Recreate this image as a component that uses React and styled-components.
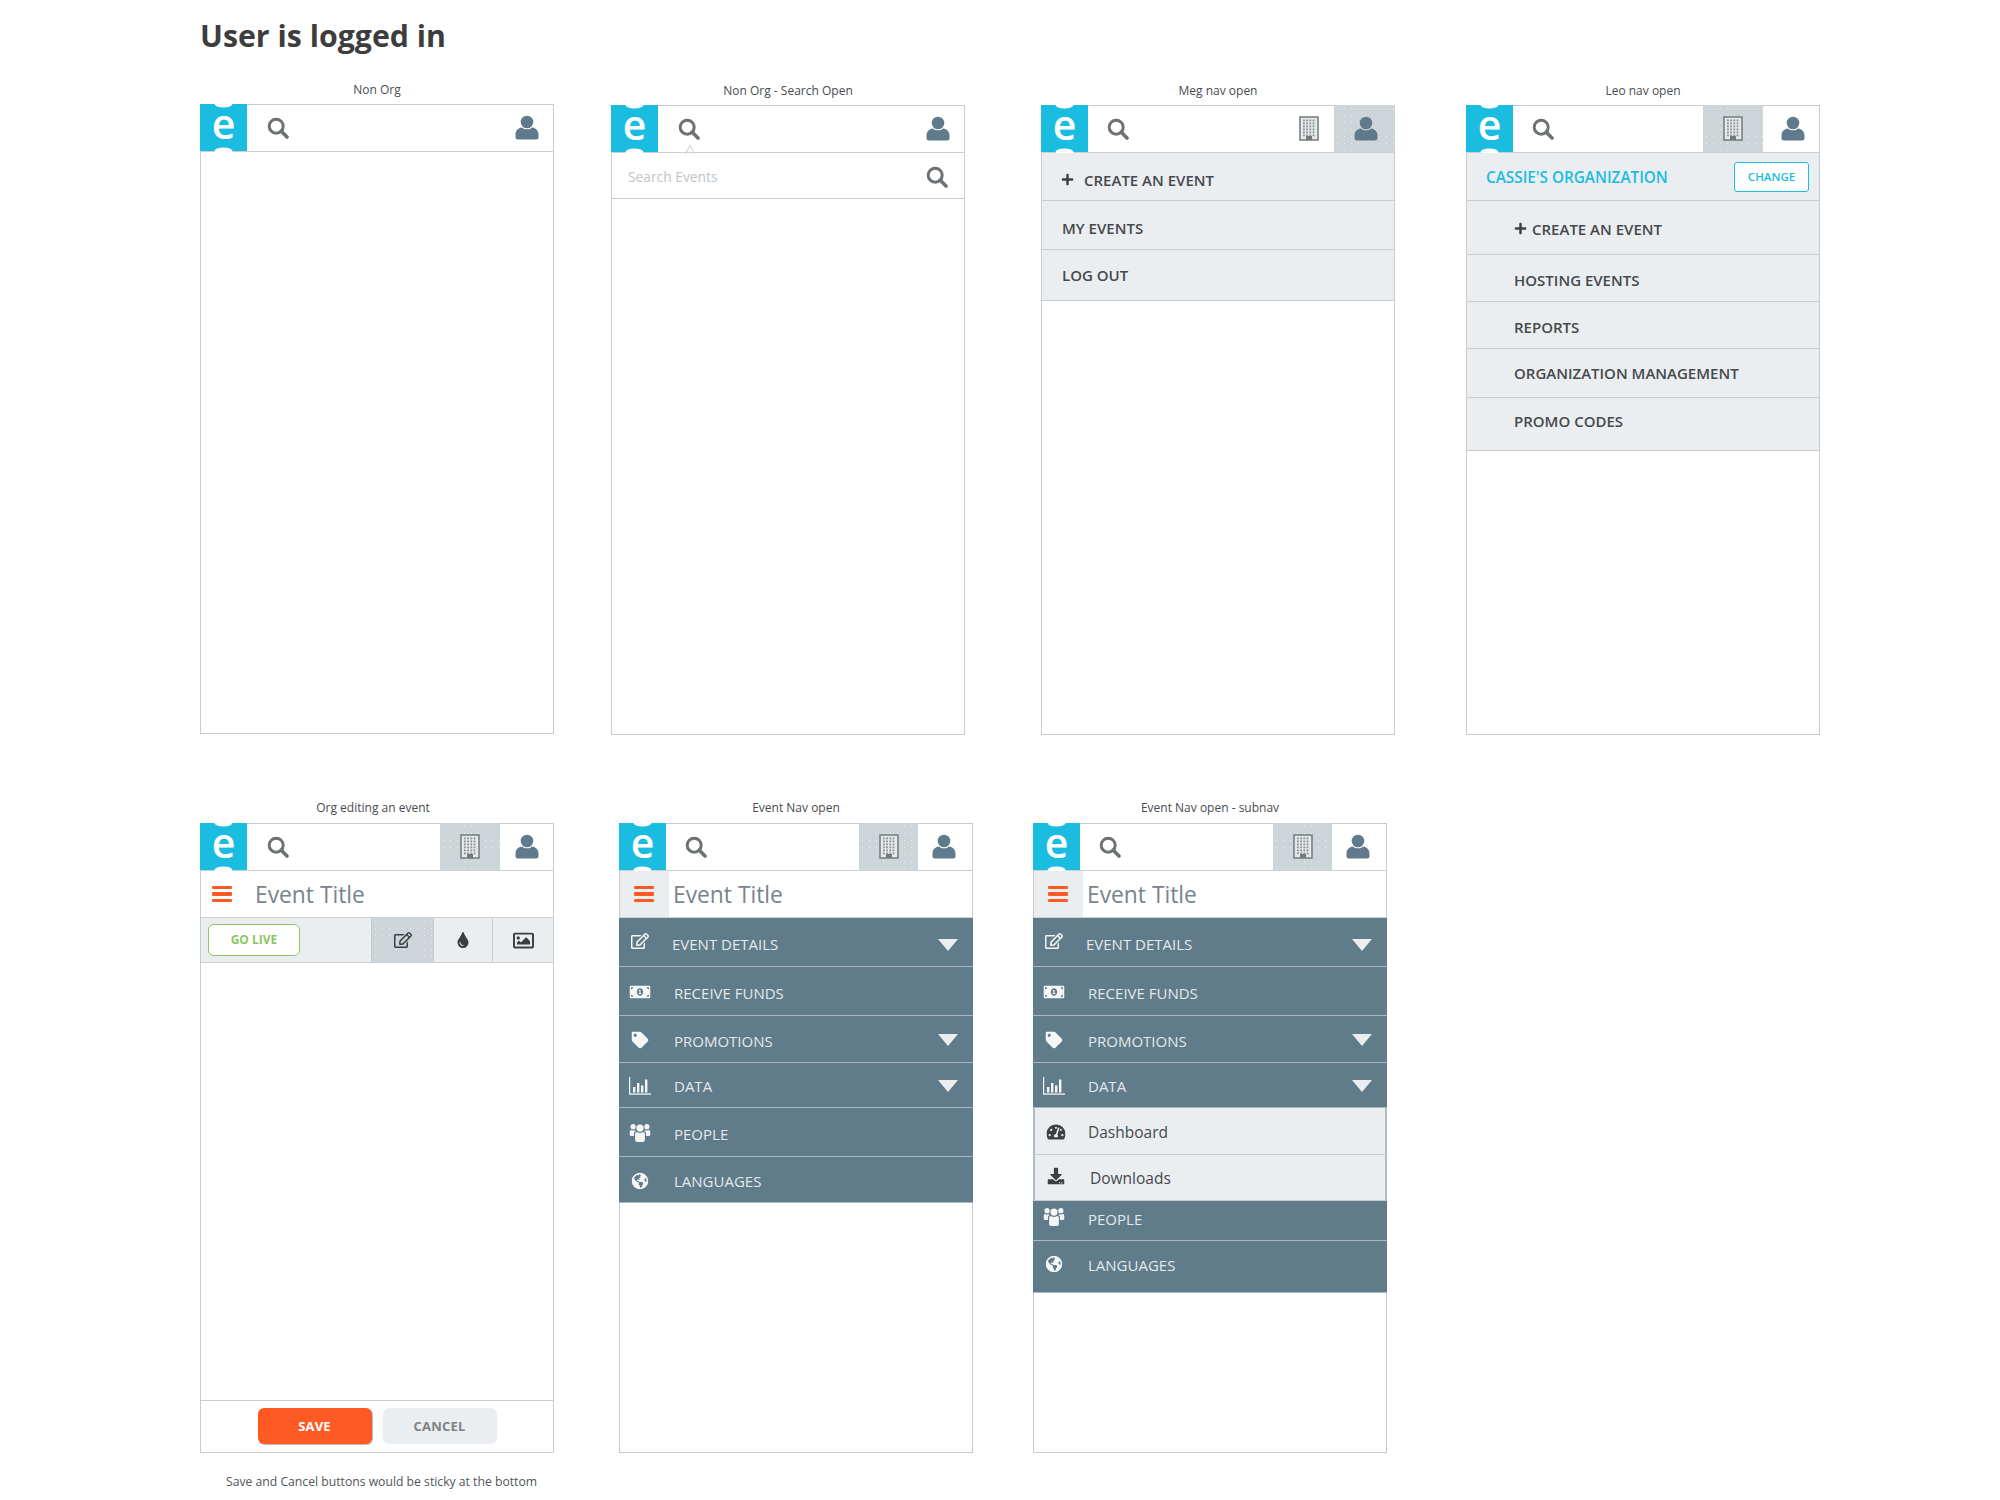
import React from "react";
import styled, { createGlobalStyle } from "styled-components";
import {
  FaPlus,
  FaRegEdit,
  FaTint,
  FaRegImage,
  FaMoneyBillAlt,
  FaTag,
  FaGlobeAmericas,
  FaTachometerAlt,
  FaDownload,
} from "react-icons/fa";

const GlobalStyle = createGlobalStyle`
  html, body {
    margin: 0;
    background: #ffffff;
    font-family: "Open Sans", "Liberation Sans", sans-serif;
  }
  * { box-sizing: border-box; }
`;

const Page = styled.div`
  width: 2000px;
  height: 1500px;
  padding: 13px 0 0 200px;
  overflow: hidden;
`;

const Title = styled.h1`
  margin: 0 0 23px;
  height: 45px;
  line-height: 45px;
  font-size: 30.3px;
  font-weight: 700;
  color: #3d3d3d;
`;

const Row = styled.div`
  display: flex;
  align-items: flex-start;
  margin-bottom: ${(p) => p.$mb || 0}px;
`;

const Column = styled.div`
  width: 354px;
  margin-left: ${(p) => p.$ml || 0}px;
  margin-top: ${(p) => p.$mt || 0}px;
`;

const Label = styled.div`
  height: 18px;
  line-height: 18px;
  margin-bottom: ${(p) => p.$mb ?? 5}px;
  padding-right: ${(p) => p.$pr || 0}px;
  font-size: 12px;
  color: #474c50;
  text-align: center;
  white-space: nowrap;
`;

const Phone = styled.div`
  position: relative;
  display: flex;
  flex-direction: column;
  width: 354px;
  height: 630px;
  border: 1px solid #c8cccf;
  background: #ffffff;
`;

const Header = styled.div`
  display: flex;
  align-items: stretch;
  flex: none;
  height: 48px;
  margin: -1px -1px 0;
  border-bottom: 1px solid #cdd1d3;
`;

const SearchCell = styled.div`
  flex: 1;
  display: flex;
  align-items: center;
  padding-left: ${(p) => p.$pl || 20}px;
`;

const HeaderCell = styled.div`
  display: flex;
  align-items: center;
  justify-content: center;
  width: ${(p) => p.$w || 60}px;
  padding-left: ${(p) => Math.max(p.$shift || 0, 0)}px;
  padding-right: ${(p) => Math.max(-(p.$shift || 0), 0)}px;
  background-color: ${(p) => (p.$active ? "#ced5d8" : "transparent")};
  background-image: ${(p) =>
    p.$active ? "radial-gradient(#e2f2f2 0.6px, transparent 0.9px)" : "none"};
  background-size: 7px 7px;
`;

const TitleBar = styled.div`
  display: flex;
  align-items: center;
  flex: none;
  height: 47px;
  border-bottom: 1px solid #cdd1d3;
`;

const MenuCell = styled.div`
  display: flex;
  align-items: center;
  justify-content: center;
  flex: none;
  align-self: stretch;
  width: ${(p) => (p.$open ? 49 : 42)}px;
  padding-right: ${(p) => (p.$open ? 2 : 0)}px;
  background: ${(p) => (p.$open ? "#ebeef1" : "transparent")};
`;

const Burger = styled.div`
  display: flex;
  flex-direction: column;
  gap: 3px;
  width: 20px;

  span {
    height: 3.5px;
    border-radius: 1px;
    background: #ff5a24;
  }
`;

const EventTitle = styled.div`
  margin-left: ${(p) => p.$ml || 0}px;
  font-size: 22.8px;
  color: #78848b;
`;

const Toolbar = styled.div`
  display: flex;
  align-items: stretch;
  flex: none;
  height: 45px;
  background: #ebeef1;
  border-bottom: 1px solid #cdd1d3;
`;

const GoLive = styled.div`
  align-self: center;
  width: 92px;
  height: 32px;
  margin: 0 auto 0 7px;
  border: 1.5px solid #8cc665;
  border-radius: 6px;
  background: #ffffff;
  font-size: 12px;
  font-weight: 700;
  line-height: 29px;
  text-align: center;
  color: #8cc665;
`;

const ToolCell = styled.div`
  display: flex;
  align-items: center;
  justify-content: center;
  width: ${(p) => p.$w}px;
  border-left: 1px solid #c6cbce;
  color: #3c3f42;
  font-size: ${(p) => p.$size || 18}px;
  background-color: ${(p) => (p.$active ? "#ced5d8" : "transparent")};
  background-image: ${(p) =>
    p.$active ? "radial-gradient(#e2f2f2 0.6px, transparent 0.9px)" : "none"};
  background-size: 7px 7px;
`;

const Footer = styled.div`
  display: flex;
  justify-content: center;
  gap: 11px;
  margin-top: auto;
  padding-top: 7px;
  flex: none;
  height: 52px;
  border-top: 1px solid #c8cccf;
`;

const FooterButton = styled.div`
  width: 114px;
  height: 36px;
  border-radius: 6px;
  background: ${(p) => (p.$primary ? "#ff5a24" : "#ebeef1")};
  box-shadow: ${(p) => (p.$primary ? "1px 1px 1px #b9bcbc" : "none")};
  color: ${(p) => (p.$primary ? "#ffffff" : "#7c8388")};
  font-size: 13px;
  font-weight: 700;
  line-height: 36px;
  text-align: center;
  letter-spacing: 0.2px;
`;

const Note = styled.div`
  margin: 20px 0 0 26px;
  font-size: 12.2px;
  line-height: 18px;
  color: #50565b;
  white-space: nowrap;
`;

const SearchBar = styled.div`
  display: flex;
  align-items: center;
  justify-content: space-between;
  flex: none;
  height: 46px;
  padding: 2px 16px 0 16px;
  border-bottom: 1px solid #cdd1d3;
  font-size: 13.8px;
  color: #c0c5c9;
`;

const Caret = styled.svg`
  position: absolute;
  top: 38px;
  left: 73px;
`;

const MenuList = styled.div`
  display: flex;
  flex-direction: column;
  flex: none;
`;

const MenuRow = styled.div`
  display: flex;
  align-items: center;
  height: ${(p) => p.$h}px;
  padding-left: ${(p) => p.$pl || 20}px;
  padding-top: ${(p) => p.$pt || 0}px;
  padding-bottom: ${(p) => p.$pb || 0}px;
  gap: ${(p) => p.$gap || 0}px;
  background: #ebeef1;
  border-bottom: 1px solid #c8cdd0;
  font-size: 15px;
  font-weight: 600;
  color: #45494c;
  white-space: nowrap;
`;

const OrgRow = styled(MenuRow)`
  justify-content: space-between;
  padding-right: 10px;
  color: #1abde0;
  font-size: 15.3px;
`;

const ChangeButton = styled.div`
  width: 75px;
  height: 30px;
  border: 1.5px solid #1abde0;
  border-radius: 3px;
  background: #ffffff;
  font-size: 11.5px;
  font-weight: 600;
  line-height: 27px;
  text-align: center;
  color: #1abde0;
`;

const PlusIcon = styled(FaPlus)`
  font-size: ${(p) => p.$size || 11}px;
  color: #3d4043;
`;

const NavList = styled.div`
  display: flex;
  flex-direction: column;
  flex: none;
  margin: 0 -1px;
`;

const NavRow = styled.div`
  position: relative;
  display: flex;
  align-items: center;
  height: ${(p) => p.$h}px;
  padding-top: ${(p) => p.$pt ?? 3}px;
  padding-bottom: ${(p) => p.$pb || 0}px;
  padding-left: ${(p) => p.$pl ?? 55}px;
  background: #607b89;
  border-bottom: 1px solid #a9b8c0;
  font-size: 15px;
  color: #e4e9ed;
  white-space: nowrap;
`;

const SubRow = styled.div`
  position: relative;
  display: flex;
  align-items: center;
  height: ${(p) => p.$h}px;
  padding-top: 1px;
  padding-left: ${(p) => p.$pl ?? 55}px;
  background: #ebeef1;
  border: 1px solid #b5bbbf;
  border-width: 0 2px 1px;
  border-bottom-color: #c6cbce;
  font-size: 15.5px;
  color: #45494c;
`;

const NavIcon = styled.span`
  position: absolute;
  left: 21px;
  top: 50%;
  display: flex;
  transform: translate(-50%, -50%);
  margin-top: ${(p) => p.$dy || 0}px;
  font-size: ${(p) => p.$size || 18}px;
  color: ${(p) => p.$color || "#f4f6f8"};
`;

const Chevron = styled.span`
  position: absolute;
  right: 15px;
  top: 50%;
  margin-top: ${(p) => p.$dy || 0}px;
  width: 0;
  height: 0;
  border-left: 10px solid transparent;
  border-right: 10px solid transparent;
  border-top: 12px solid #ebeef1;
`;

function Logo() {
  return (
    <svg width="47" height="47" viewBox="0 0 47 47" style={{ flex: "none", overflow: "visible" }}>
      <rect width="47" height="47" fill="#1abde0" />
      <ellipse cx="23.5" cy="0" rx="9" ry="3.5" fill="#fff" />
      <ellipse cx="23.5" cy="47" rx="9" ry="3.5" fill="#fff" />
      <text
        x="23.5"
        y="35"
        textAnchor="middle"
        fontSize="41"
        fontWeight="600"
        fontFamily="Open Sans, sans-serif"
        fill="#fff"
      >
        e
      </text>
    </svg>
  );
}

function SearchIcon({ size = 22 }) {
  return (
    <svg width={size} height={size} viewBox="0 0 22 22" fill="none" stroke="#6f7274">
      <circle cx="9.2" cy="9.2" r="7" strokeWidth="3" />
      <path d="M14.3 14.3 L20 20" strokeWidth="3.6" strokeLinecap="round" />
    </svg>
  );
}

function UserIcon() {
  return (
    <svg width="24" height="25" viewBox="0 0 24 25" fill="#5f7b8b">
      <circle cx="12" cy="7" r="6.3" />
      <path d="M7 12.4 C9 15 15 15 17 12.4 C21 13 23.5 15.5 23.5 19.5 L23.5 22 Q23.5 24.5 21 24.5 L3 24.5 Q0.5 24.5 0.5 22 L0.5 19.5 C0.5 15.5 3 13 7 12.4 Z" />
    </svg>
  );
}

function BuildingIcon() {
  const dots = [];
  for (let r = 0; r < 6; r++) {
    for (let c = 0; c < 4; c++) {
      dots.push(<rect key={`${r}-${c}`} x={4 + c * 3.2} y={3.5 + r * 3} width="1.8" height="1.8" />);
    }
  }
  return (
    <svg width="20" height="25" viewBox="0 0 20 25">
      <rect x="1" y="1" width="18" height="23" fill="#e6e9ea" stroke="#7b8184" strokeWidth="1.6" />
      <g fill="#8b9093">{dots}</g>
      <rect x="7" y="20" width="6" height="4" fill="#74797c" />
    </svg>
  );
}

function BarsIcon() {
  return (
    <svg width="22" height="18" viewBox="0 0 22 18" fill="#f4f6f8">
      <rect x="0" y="0" width="1.2" height="17" />
      <rect x="0" y="16.4" width="22" height="1.3" />
      <rect x="4" y="10" width="2.4" height="5.5" />
      <rect x="8" y="6" width="2.4" height="9.5" />
      <rect x="12" y="8.5" width="2.4" height="7" />
      <rect x="16" y="2.5" width="2.4" height="13" />
    </svg>
  );
}

function PeopleIcon() {
  return (
    <svg width="21" height="19" viewBox="0 0 21 19" fill="#f4f6f8">
      <circle cx="10.5" cy="4.6" r="3.6" />
      <circle cx="3.6" cy="3.2" r="2.6" />
      <circle cx="17.4" cy="3.2" r="2.6" />
      <path d="M5.6 10.4 Q5.6 8.6 7.4 8.6 Q10.5 10.4 13.6 8.6 Q15.4 8.6 15.4 10.4 L15.4 16.6 Q15.4 18.6 13.4 18.6 L7.6 18.6 Q5.6 18.6 5.6 16.6 Z" />
      <path d="M0 8.6 Q0 6.4 1.8 6.4 Q3.6 7.6 5.6 6.4 Q5.9 7 5.7 7.8 Q4.4 8.4 4.4 10.4 L4.4 12.4 L1.6 12.4 Q0 12.4 0 10.8 Z" />
      <path d="M21 8.6 Q21 6.4 19.2 6.4 Q17.4 7.6 15.4 6.4 Q15.1 7 15.3 7.8 Q16.6 8.4 16.6 10.4 L16.6 12.4 L19.4 12.4 Q21 12.4 21 10.8 Z" />
    </svg>
  );
}

function TopBar({ building, active, searchPl, userW, userShift, buildingW }) {
  return (
    <Header>
      <Logo />
      <SearchCell $pl={searchPl}>
        <SearchIcon />
      </SearchCell>
      {building && (
        <HeaderCell $active={active === "building"} $w={buildingW || 60}>
          <BuildingIcon />
        </HeaderCell>
      )}
      <HeaderCell $active={active === "user"} $w={userW || 54} $shift={userShift}>
        <UserIcon />
      </HeaderCell>
    </Header>
  );
}

function EventBar({ open }) {
  return (
    <TitleBar>
      <MenuCell $open={open}>
        <Burger>
          <span />
          <span />
          <span />
        </Burger>
      </MenuCell>
      <EventTitle $ml={open ? 4 : 12}>Event Title</EventTitle>
    </TitleBar>
  );
}

function EventNavTop() {
  return (
    <>
      <NavRow $h={49} $pl={53}>
        <NavIcon $dy={-1}><FaRegEdit /></NavIcon>
        EVENT DETAILS
        <Chevron $dy={-3} />
      </NavRow>
      <NavRow $h={49}>
        <NavIcon $dy={1}><FaMoneyBillAlt size={21} /></NavIcon>
        RECEIVE FUNDS
      </NavRow>
      <NavRow $h={47}>
        <NavIcon $dy={1}><FaTag size={17} /></NavIcon>
        PROMOTIONS
        <Chevron $dy={-5} />
      </NavRow>
      <NavRow $h={45} $pt={2}>
        <NavIcon $dy={1}><BarsIcon /></NavIcon>
        DATA
        <Chevron $dy={-5} />
      </NavRow>
    </>
  );
}

export default function App() {
  return (
    <Page>
      <GlobalStyle />
      <Title>User is logged in</Title>

      <Row $mb={64}>
        <Column>
          <Label>Non Org</Label>
          <Phone>
            <TopBar />
          </Phone>
        </Column>

        <Column $ml={57} $mt={1}>
          <Label>Non Org - Search Open</Label>
          <Phone>
            <TopBar />
            <SearchBar>
              Search Events
              <SearchIcon />
            </SearchBar>
            <Caret width="10" height="10" viewBox="0 0 10 10" fill="none" stroke="#c9cdd0">
              <path d="M0.5 10 L5 1 L9.5 10" />
            </Caret>
          </Phone>
        </Column>

        <Column $ml={76} $mt={1}>
          <Label>Meg nav open</Label>
          <Phone>
            <TopBar building active="user" userW={61} userShift={2} buildingW={50} searchPl={19} />
            <MenuList>
              <MenuRow $h={48} $gap={10} $pl={19} $pt={6}>
                <PlusIcon $size={13} />
                CREATE AN EVENT
              </MenuRow>
              <MenuRow $h={49} $pt={6}>MY EVENTS</MenuRow>
              <MenuRow $h={51}>LOG OUT</MenuRow>
            </MenuList>
          </Phone>
        </Column>

        <Column $ml={71} $mt={1}>
          <Label>Leo nav open</Label>
          <Phone>
            <TopBar building active="building" userW={57} userShift={2} searchPl={19} />
            <MenuList>
              <OrgRow $h={48} $pl={19}>
                CASSIE'S ORGANIZATION
                <ChangeButton>CHANGE</ChangeButton>
              </OrgRow>
              <MenuRow $h={54} $pl={47} $gap={5} $pt={2}>
                <PlusIcon $size={13} />
                CREATE AN EVENT
              </MenuRow>
              <MenuRow $h={47} $pl={47} $pt={4}>HOSTING EVENTS</MenuRow>
              <MenuRow $h={47} $pl={47} $pt={4}>REPORTS</MenuRow>
              <MenuRow $h={49} $pl={47}>ORGANIZATION MANAGEMENT</MenuRow>
              <MenuRow $h={53} $pl={47} $pb={6}>PROMO CODES</MenuRow>
            </MenuList>
          </Phone>
        </Column>
      </Row>

      <Row>
        <Column>
          <Label $pr={8} $mb={6}>Org editing an event</Label>
          <Phone>
            <TopBar building active="building" />
            <EventBar />
            <Toolbar>
              <GoLive>GO LIVE</GoLive>
              <ToolCell $w={62} $active><FaRegEdit /></ToolCell>
              <ToolCell $w={59} $size={16}><FaTint /></ToolCell>
              <ToolCell $w={61} $size={21}><FaRegImage /></ToolCell>
            </Toolbar>
            <Footer>
              <FooterButton $primary>SAVE</FooterButton>
              <FooterButton>CANCEL</FooterButton>
            </Footer>
          </Phone>
          <Note>Save and Cancel buttons would be sticky at the bottom</Note>
        </Column>

        <Column $ml={65}>
          <Label $mb={6}>Event Nav open</Label>
          <Phone>
            <TopBar building active="building" userW={55} userShift={-4} buildingW={59} searchPl={19} />
            <EventBar open />
            <NavList>
              <EventNavTop />
              <NavRow $h={49}>
                <NavIcon $dy={1}><PeopleIcon /></NavIcon>
                PEOPLE
              </NavRow>
              <NavRow $h={46}>
                <NavIcon $dy={1}><FaGlobeAmericas size={17} /></NavIcon>
                LANGUAGES
              </NavRow>
            </NavList>
          </Phone>
        </Column>

        <Column $ml={60}>
          <Label $mb={6}>Event Nav open - subnav</Label>
          <Phone>
            <TopBar building active="building" userW={55} userShift={-4} buildingW={59} searchPl={19} />
            <EventBar open />
            <NavList>
              <EventNavTop />
              <SubRow $h={47} $pl={53}>
                <NavIcon $color="#3d4043" $dy={1}><FaTachometerAlt size={19} /></NavIcon>
                Dashboard
              </SubRow>
              <SubRow $h={46}>
                <NavIcon $color="#3d4043" $dy={-2}><FaDownload size={17} /></NavIcon>
                Downloads
              </SubRow>
              <NavRow $h={40} $pt={0} $pb={4}>
                <NavIcon $dy={-4}><PeopleIcon /></NavIcon>
                PEOPLE
              </NavRow>
              <NavRow $h={52} $pt={0} $pb={4}>
                <NavIcon $dy={-3}><FaGlobeAmericas size={17} /></NavIcon>
                LANGUAGES
              </NavRow>
            </NavList>
          </Phone>
        </Column>
      </Row>
    </Page>
  );
}
